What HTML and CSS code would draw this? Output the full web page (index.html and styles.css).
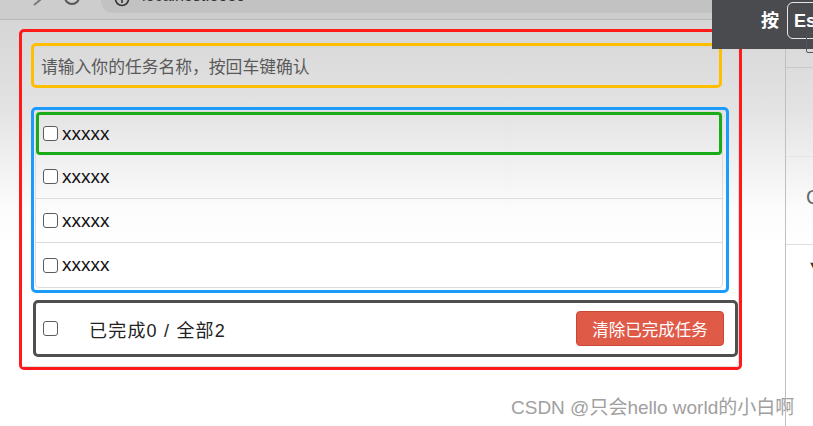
FILE: index.html
```html
<!DOCTYPE html>
<html lang="zh-CN">
<head>
<meta charset="utf-8">
<title>todo</title>
<link rel="stylesheet" href="styles.css">
</head>
<body>
<header class="toolbar">
  <svg class="nav-fwd" width="12" height="19" viewBox="0 0 12 19"><polyline points="2,-5 8,0 2,5" fill="none" stroke="#7a7a7a" stroke-width="2"/></svg>
  <svg class="nav-reload" width="18" height="19" viewBox="0 0 18 19"><circle cx="9" cy="-3" r="7" fill="none" stroke="#555" stroke-width="2"/></svg>
  <div class="omnibox">
    <svg class="info-icon" width="16" height="13" viewBox="0 0 16 13"><circle cx="8" cy="-1" r="6.5" fill="none" stroke="#333" stroke-width="1.6"/><line x1="8" y1="-1" x2="8" y2="3" stroke="#333" stroke-width="1.6"/></svg>
    <span class="url">localhost:8080</span>
  </div>
</header>

<div class="fs-prompt">
  <span class="fs-text">按</span>
  <span class="fs-key">Esc</span>
</div>

<div class="page">
  <main class="content">
    <section class="mark-red">
      <div class="app">
        <div class="mark-yellow">
          <input class="new-todo" type="text" placeholder="请输入你的任务名称，按回车键确认">
        </div>
        <div class="mark-blue">
          <ul class="todo-list">
            <li class="todo-item mark-green"><input class="check" type="checkbox"><span class="todo-text">xxxxx</span></li>
            <li class="todo-item"><input class="check" type="checkbox"><span class="todo-text">xxxxx</span></li>
            <li class="todo-item"><input class="check" type="checkbox"><span class="todo-text">xxxxx</span></li>
            <li class="todo-item"><input class="check" type="checkbox"><span class="todo-text">xxxxx</span></li>
          </ul>
        </div>
        <footer class="todo-footer">
          <input class="check" type="checkbox">
          <span class="count">已完成0 / 全部2</span>
          <button class="btn-clear" type="button">清除已完成任务</button>
        </footer>
      </div>
    </section>
  </main>
  <aside class="side">
    <div class="side-top"><span class="side-box"></span></div>
    <div class="side-mid"></div>
    <div class="side-row"><span class="side-glyph">C</span></div>
    <div class="side-row2"><span class="side-arrow">▼</span></div>
  </aside>
</div>

<div class="watermark">CSDN @只会hello world的小白啊</div>
</body>
</html>
```

FILE: styles.css
```css
* { box-sizing: border-box; }

html, body {
  margin: 0;
  padding: 0;
  width: 813px;
  height: 426px;
  overflow: hidden;
  background: #fff;
  font-family: "Liberation Sans", "Noto Sans CJK SC", sans-serif;
}

body { position: relative; }

/* browser toolbar (cut off at top) */
.toolbar {
  display: flex;
  align-items: flex-start;
  height: 20px;
  background: #cdcdcd;
  border-bottom: 1px solid #b9b9b9;
  overflow: hidden;
}
.nav-fwd { margin-left: 32px; flex: none; }
.nav-reload { margin-left: 19px; flex: none; }
.omnibox {
  flex: 1;
  display: flex;
  align-items: flex-start;
  margin-left: 20px;
  height: 13px;
  background: #c2c2c2;
  border-radius: 0 0 0 12px;
  overflow: hidden;
}
.info-icon { margin-left: 13px; flex: none; }
.url {
  margin-left: 12px;
  margin-top: -12px;
  font-size: 16px;
  line-height: 16px;
  color: #333;
}

/* fullscreen hint overlay */
.fs-prompt {
  position: absolute;
  top: 0;
  right: 0;
  width: 101px;
  height: 49px;
  background: #4a4b4f;
  display: flex;
  align-items: flex-start;
  overflow: hidden;
}
.fs-text {
  margin: 9px 0 0 49px;
  color: #fff;
  font-family: "Noto Sans CJK SC", sans-serif;
  font-weight: 700;
  font-size: 18px;
  line-height: 20px;
}
.fs-key {
  margin: 2px 0 0 8px;
  height: 37px;
  padding: 8px 0 0 6px;
  width: 40px;
  flex: none;
  border: 1.5px solid #e6e6e6;
  border-radius: 6px;
  color: #fff;
  font-weight: 700;
  font-size: 18px;
  line-height: 20px;
}

/* page */
.page {
  display: flex;
  height: 406px;
  background: linear-gradient(#d6d6d6 0px, #e3e3e3 90px, #fcfcfc 190px, #ffffff 230px);
}
.content {
  flex: 1;
  padding-top: 9px;
}

.mark-red {
  margin-left: 19px;
  width: 723px;
  height: 341px;
  border: 3px solid #ff1a1a;
  border-radius: 5px;
}
.app {
  height: 100%;
  padding-top: 11px;
  border-right: 1px solid #dcdcdc;
  border-bottom: 1px solid #dcdcdc;
  border-radius: 0 0 5px 0;
}

.mark-yellow {
  margin-left: 9px;
  width: 691px;
  height: 45px;
  border: 3px solid #ffbe00;
  border-radius: 5px;
  display: flex;
  align-items: center;
}
.new-todo {
  width: 100%;
  border: 0;
  background: transparent;
  padding: 0 0 0 7px;
  margin: 0;
  font-family: "Noto Sans CJK SC", sans-serif;
  font-size: 16.8px;
  color: #555;
  outline: none;
}
.new-todo::placeholder { color: #5a5a5a; }

.mark-blue {
  margin: 19px 0 0 9px;
  width: 698px;
  height: 186px;
  border: 3px solid #1b9cfc;
  border-radius: 5px;
}
.todo-list {
  list-style: none;
  margin: 1px 0 0 1px;
  padding: 0;
  width: 688px;
  border: 1px solid #dcdcdc;
  border-radius: 4px;
}
.todo-item {
  display: flex;
  align-items: center;
  height: 44px;
  padding-left: 7px;
  border-bottom: 1px solid #dcdcdc;
}
.todo-item:last-child { border-bottom: 0; height: 44px; }
.todo-item.mark-green {
  height: 43px;
  padding-left: 4px;
  border: 3px solid #1aab1a;
  border-radius: 4px;
}

.check {
  appearance: none;
  -webkit-appearance: none;
  flex: none;
  width: 15px;
  height: 15px;
  margin: 0;
  border: 1.5px solid #5c5c5c;
  border-radius: 3px;
  background: #fff;
}
.todo-text {
  margin-left: 4px;
  font-size: 19px;
  color: #111;
}

.todo-footer {
  margin: 7px 0 0 11px;
  width: 705px;
  height: 57px;
  border: 3px solid #4f4f4f;
  border-radius: 5px;
  display: flex;
  align-items: center;
  padding: 0 11px 0 7px;
}
.count {
  margin-left: 31px;
  font-family: "Liberation Sans", "Noto Sans CJK SC", sans-serif;
  font-size: 18px;
  letter-spacing: 1.2px;
  color: #222;
}
.btn-clear {
  margin-left: auto;
  width: 148px;
  height: 35px;
  padding: 0;
  border: 1px solid #c94636;
  border-radius: 4px;
  background: #e05a48;
  color: #fff;
  font-family: "Noto Sans CJK SC", sans-serif;
  font-size: 16.5px;
  line-height: 20px;
}

/* right side panel (partially visible) */
.side {
  width: 28px;
  flex: none;
  border-left: 1px solid #c0c0c0;
  display: flex;
  flex-direction: column;
}
.side-top {
  height: 48px;
  border-bottom: 1px solid #c9c9c9;
  position: relative;
}
.side-box {
  position: absolute;
  left: 20px;
  top: 13px;
  width: 12px;
  height: 20px;
  border: 1.5px solid #555;
  border-radius: 2px;
}
.side-mid {
  height: 89px;
  border-bottom: 1px solid #e4e4e4;
}
.side-row {
  height: 88px;
  border-bottom: 1px solid #dedede;
  padding: 28px 0 0 20px;
  font-size: 20px;
  line-height: 24px;
  color: #666;
  overflow: hidden;
}
.side-row2 {
  padding: 14px 0 0 22px;
  font-size: 11px;
  color: #333;
}

.watermark {
  position: absolute;
  left: 511px;
  top: 398px;
  font-family: "Liberation Sans", "Noto Sans CJK SC", sans-serif;
  font-size: 19px;
  line-height: 20px;
  color: #a0a0a0;
  text-shadow: 0 0 1px #fff;
  white-space: nowrap;
}
```
